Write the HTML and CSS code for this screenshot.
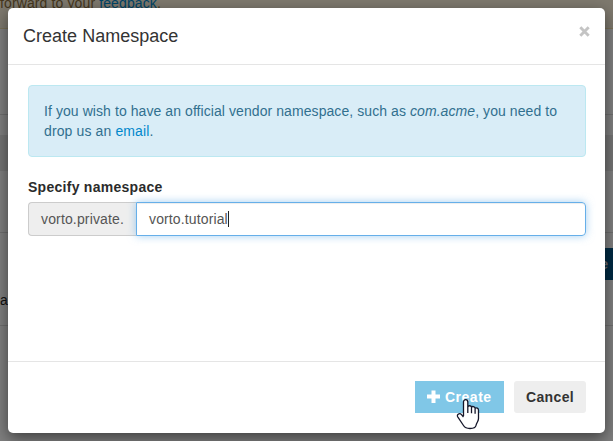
FILE: index.html
```
<!DOCTYPE html>
<html lang="en">
<head>
<meta charset="utf-8">
<title>Create Namespace</title>
<link rel="stylesheet" href="styles.css">
</head>
<body>
<div class="page">
  <div class="notice"><span>forward to your <a class="feedback">feedback</a>.</span></div>
  <div class="row row-top"></div>
  <div class="row row-band"><div class="band"></div></div>
  <div class="row row-content">
    <div class="page-button">e</div>
    <div class="page-text">a</div>
  </div>
</div>
<div class="backdrop"></div>
<div class="modal">
  <div class="modal-header">
    <h4 class="title">Create Namespace</h4>
    <svg class="close" viewBox="0 0 11 11"><path d="M1.3 1.3L9.7 9.7M9.7 1.3L1.3 9.7"/></svg>
  </div>
  <div class="modal-body">
    <div class="alert"><div class="line alert-first">If you wish to have an official vendor namespace, such as <em>com.acme</em>, you need to</div><div class="line alert-second">drop us an <a class="link">email</a>.</div></div>
    <div class="label"><span>Specify namespace</span></div>
    <div class="input-group">
      <div class="addon"><span>vorto.private.</span></div>
      <div class="input"><span>vorto.tutorial</span><i class="caret"></i></div>
    </div>
  </div>
  <div class="modal-footer">
    <div class="button primary">
      <svg class="plus" viewBox="0 0 13 13"><path d="M4.5 0.5h4v4h4.5v4h-4.5v4.5h-4v-4.5H0v-4h4.5z"/></svg>
      <span class="create-text">Create</span>
    </div>
    <div class="button cancel"><span class="cancel-text">Cancel</span></div>
  </div>
</div>
<svg class="cursor" viewBox="0 0 24 31"><path d="M7.5 17V3C7.5-.1 11.8-.1 11.8 3V8C12.3 6.2 15.2 6.4 15.5 8.2C16.3 7 18.8 7.4 19.1 9.2C20.5 8.3 22.5 9.2 22.5 11.2V19.5C22.5 22.5 20.5 23.5 20 26.5C19.5 29.2 17.3 29.5 14 29.5C10.5 29.5 9 29 7.5 26.5L1.9 18.2C0 15.2 3.8 13.6 5.7 15.8L7.5 18M11.8 8V14M15.5 8.2V14.3M19.1 9.2V14.8"/></svg>
</body>
</html>
```
FILE: styles.css
```
* { box-sizing: border-box; }
body {
  margin: 0;
  width: 613px;
  height: 441px;
  overflow: hidden;
  position: relative;
  background: #fff;
  color: #333;
  font: 14px/20px "Liberation Sans", Arial, sans-serif;
}
.page { height: 441px; display: flex; flex-direction: column; }
.notice {
  height: 29px;
  background: #fcf3dc;
  border-bottom: 1px solid #f5e3b0;
  color: #8a6d3b;
  line-height: 7px;
  letter-spacing: .12px;
}
.feedback { color: #0088cc; text-decoration: underline; }
.row { border-bottom: 1px solid #ddd; }
.row-top { height: 86px; }
.row-band { height: 118px; padding-top: 20px; }
.band { height: 36px; background: #e9e9e9; }
.row-content { height: 93px; padding-top: 15px; }
.page-button {
  width: 83px;
  height: 32px;
  margin-left: 530px;
  padding-right: 5px;
  text-align: right;
  line-height: 32px;
  font-weight: bold;
  background: #005587;
  color: #ddd;
}
.page-text { margin-top: 10px; line-height: 20px; color: #222; }
.backdrop { position: absolute; inset: 0; background: rgba(0, 0, 0, .5); }
.modal {
  position: absolute;
  left: 8px;
  top: 8px;
  width: 597px;
  height: 425px;
  display: flex;
  flex-direction: column;
  background: #fff;
  border-radius: 5px;
  box-shadow: 0 5px 15px rgba(0, 0, 0, .5);
}
.modal-header {
  height: 57px;
  padding: 0 15px;
  display: flex;
  justify-content: space-between;
  border-bottom: 1px solid #e5e5e5;
}
.title { margin: 15px 0 0; font-size: 18px; line-height: 26px; font-weight: normal; letter-spacing: .02px; }
.close { width: 11px; height: 11px; margin: 18px 0 0; fill: none; stroke: #c4c4c4; stroke-width: 2.9; }
.modal-body { height: 296px; padding: 20px 19px 0 20px; }
.alert {
  height: 72px;
  padding: 15px;
  background: #d9edf7;
  border: 1px solid #bce8f1;
  border-radius: 4px;
  color: #31708f;
}
.line { white-space: nowrap; }
.alert-first { letter-spacing: .075px; }
.alert-second { letter-spacing: .12px; }
.link { color: #0088cc; }
.label { margin-top: 20px; height: 20px; font-weight: bold; letter-spacing: .27px; color: #2b2b2b; }
.input-group { margin-top: 5px; height: 34px; display: flex; }
.addon {
  width: 108px;
  padding: 6px 12px;
  background: #eee;
  border: 1px solid #ccc;
  border-right: 0;
  border-radius: 4px 0 0 4px;
  color: #555;
  letter-spacing: .15px;
}
.input {
  flex: 1;
  display: flex;
  padding: 6px 12px;
  border: 1px solid #66afe9;
  border-radius: 0 4px 4px 0;
  color: #555;
  letter-spacing: .13px;
  box-shadow: inset 0 1px 1px rgba(0, 0, 0, .075), 0 0 8px rgba(102, 175, 233, .6);
}
.caret { width: 1px; height: 16px; margin-top: 2px; background: #222; }
.modal-footer {
  height: 72px;
  padding: 19px 19px 0;
  display: flex;
  justify-content: flex-end;
  gap: 10px;
  border-top: 1px solid #e5e5e5;
}
.button { height: 32px; display: flex; line-height: 32px; font-weight: bold; }
.primary { width: 89px; padding-left: 12px; background: #80c7e7; color: #fff; letter-spacing: .5px; }
.plus { width: 13px; height: 13px; margin: 9px 5px 0 0; fill: #fff; }
.cancel { width: 72px; padding-left: 12px; background: #eee; border-radius: 3px; letter-spacing: .35px; }
.cursor {
  position: absolute;
  left: 456px;
  top: 399px;
  width: 24px;
  height: 31px;
  fill: #fff;
  stroke: #15172a;
  stroke-width: 1.3;
  stroke-linejoin: round;
}
```
